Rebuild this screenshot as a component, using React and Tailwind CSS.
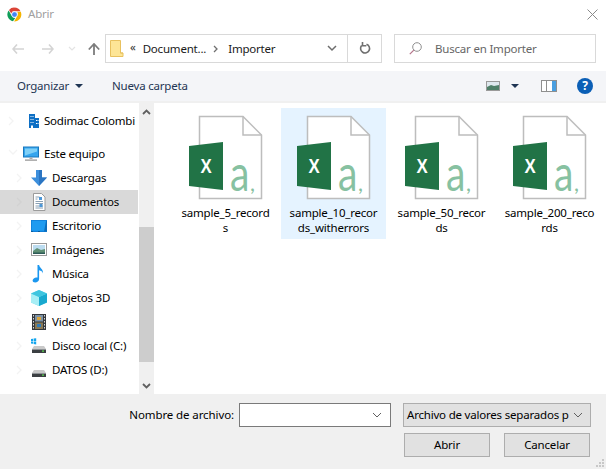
const font = { fontFamily: '"Noto Sans", sans-serif' };

function Chrome() {
  return (
    <svg width="15" height="15" viewBox="0 0 24 24" className="shrink-0">
      <path d="M12 1a11 11 0 0 1 9.600 5.600H12a5.500 5.500 0 0 0-5.200 3.600L3.200 4.600A11 11 0 0 1 12 1z" fill="#db4437" />
      <path d="M2.600 5.600l5 8.600a5.500 5.500 0 0 0 5.600 3.200L9.600 22.800A11 11 0 0 1 2.600 5.600z" fill="#0f9d58" />
      <path d="M22 7.600a11 11 0 0 1-10.600 15.400l5-8.600a5.500 5.500 0 0 0-.4-6.800z" fill="#f4b400" />
      <circle cx="12" cy="12" r="4.400" fill="#4285f4" stroke="#fff" strokeWidth="1" />
    </svg>
  );
}

function Chev({ dir = 'right', color = '#f3f3f3' }) {
  const d = dir === 'right' ? 'M1 1l4 4-4 4' : 'M1 1l4 4 4-4';
  return (
    <svg width="10" height="10" viewBox="0 0 10 10" className="shrink-0">
      <path d={d} fill="none" stroke={color} strokeWidth="1.300" />
    </svg>
  );
}

function Building() {
  return (
    <svg width="16" height="16" viewBox="0 0 16 16">
      <path d="M3 1h6v14H3zM9 5h4v10H9z" fill="#0e6fc4" />
      <path d="M4.500 3h1v1h-1zM6.500 3h1v1h-1zM4.500 6h1v1h-1zM6.500 6h1v1h-1zM4.500 9h1v1h-1zM6.500 9h1v1h-1zM10 7h1v1h-1zM11.500 7h1v1h-1zM10 10h1v1h-1zM11.500 10h1v1h-1zM5 12.500h2V15H5z" fill="#fff" />
    </svg>
  );
}
function Monitor() {
  return (
    <svg width="16" height="16" viewBox="0 0 16 16">
      <rect x="0.500" y="1" width="15" height="10" fill="#35a5ee" stroke="#1a78bd" />
      <path d="M2 2.500h12v3L2 9.500z" fill="#7fd0f7" />
      <path d="M6.500 11.500h3V13h-3z" fill="#a9a9a9" />
      <path d="M2 13.500h12v1.200H2z" fill="#8f8f8f" />
    </svg>
  );
}
function Down() {
  return (
    <svg width="16" height="16" viewBox="0 0 16 16">
      <path d="M5 0h6v7.500h5L8 16 0 7.500h5z" fill="#3d8fdc" />
      <path d="M8 0h3v7.500h5L8 16z" fill="#2b75c2" />
    </svg>
  );
}
function Doc() {
  return (
    <svg width="16" height="18" viewBox="0 0 16 18">
      <path d="M2.500 .5h8l3.500 3.500v13.500H2.500z" fill="#fff" stroke="#9b9b9b" />
      <path d="M4.500 4h4M4.500 6h2M4.500 8.500h7.500M4.500 10.500h7.500M4.500 13h7.500M4.500 15h7.500" stroke="#8aa0b4" strokeWidth="1" />
      <path d="M8 4h3v3H8zM8.500 11h3v3h-3z" fill="#4c97d8" />
    </svg>
  );
}
function Desktop() {
  return (
    <svg width="16" height="16" viewBox="0 0 16 16">
      <rect x="0" y="2" width="16" height="12" fill="#0f7fd8" />
      <rect x="0.800" y="2.800" width="14.400" height="10" fill="#1e9bf0" />
      <path d="M16 13.500h-3L15 3h1z" fill="#0c6dbb" />
      <path d="M0 14h2v-1H0zM7 14h2v-1H7z" fill="#0a5c9e" />
    </svg>
  );
}
function Pics() {
  return (
    <svg width="16" height="14" viewBox="0 0 16 14">
      <rect x="0.500" y="0.500" width="15" height="12" fill="#fff" stroke="#9a9a9a" />
      <rect x="2" y="2" width="12" height="9" fill="#bcdcf0" />
      <path d="M2 8l4-3 4 2 4-1v5H2z" fill="#5f8f74" />
      <path d="M2 9.500h12V11H2z" fill="#2d5a57" />
    </svg>
  );
}
function Music() {
  return (
    <svg width="16" height="18" viewBox="0 0 16 18">
      <path d="M6.500 0h1.600c.4 3 4.400 4 3.900 8.400C11.600 6.600 10 5.600 8.100 5.200V14c0 2-2 3.600-4 3.600-1.500 0-2.500-.8-2.500-2 0-1.800 2-3.200 3.700-3.200.5 0 .9.100 1.200.2z" fill="#1b97ef" />
    </svg>
  );
}
function Cube() {
  return (
    <svg width="16" height="16" viewBox="0 0 16 16">
      <path d="M8 0l8 3.500v9L8 16 0 12.500v-9z" fill="#6fdcec" />
      <path d="M0 3.500L8 7v9l-8-3.500z" fill="#a7eef5" />
      <path d="M8 7l8-3.500v9L8 16z" fill="#19a9cf" />
      <path d="M8 0l8 3.500L8 7 0 3.500z" fill="#3fc5df" />
    </svg>
  );
}
function Film() {
  return (
    <svg width="14" height="16" viewBox="0 0 14 16">
      <rect width="14" height="16" fill="#34383c" />
      <rect x="3" y="1" width="8" height="6.500" fill="#7d93a7" />
      <rect x="3" y="8.500" width="8" height="6.500" fill="#8a7a55" />
      <path d="M5 3h4v3H5z" fill="#d9a53b" />
      <path d="M5 10h4v3H5z" fill="#2f7dbd" />
      <path d="M1 1h1v1.500H1zM1 4h1v1.500H1zM1 7h1v1.500H1zM1 10h1v1.500H1zM1 13h1v1.500H1zM12 1h1v1.500h-1zM12 4h1v1.500h-1zM12 7h1v1.500h-1zM12 10h1v1.500h-1zM12 13h1v1.500h-1z" fill="#d8d8d8" />
    </svg>
  );
}
function Disk({ win }) {
  return (
    <svg width="16" height="16" viewBox="0 0 16 16">
      {win && <path d="M0 1l2-.3V3H0zM2.600.6L5.200.2V3H2.600zM0 3.600h2v2.200L0 5.500zM2.600 3.600h2.600v2.800l-2.600-.4z" fill="#11a5ee" />}
      <path d="M3 8h10l2 3H1z" fill="#c9c9c9" />
      <rect x="1" y="11" width="14" height="4" fill="#3b3f42" />
      <rect x="1" y="11" width="14" height="1" fill="#8d9194" />
      <rect x="11" y="12.500" width="2" height="1.200" fill="#5bdc4f" />
    </svg>
  );
}

function NavRow({ icon, label, selected }) {
  return (
    <div className={`h-[24px] flex items-center pl-[16px] ${selected ? 'bg-[#d9d9d9]' : ''}`}>
      <Chev color={selected ? '#d2d2d2' : '#f3f3f3'} />
      <div className="w-[16px] ml-[5px] mr-[5px] shrink-0 flex justify-center items-center">{icon}</div>
      <span className="whitespace-nowrap text-black">{label}</span>
    </div>
  );
}

function ExcelDoc() {
  return (
    <svg width="80" height="90" viewBox="0 0 80 90" className="block">
      <path d="M13.500 4.500H57L75.500 23v63.500h-62z" fill="#fff" stroke="#bdbdbd" strokeWidth="1.500" />
      <path d="M57 4.500V23h18.500" fill="none" stroke="#bdbdbd" strokeWidth="1.500" />
      <path d="M3 34l34-4v48l-34-4z" fill="#217346" />
      <text transform="translate(20 61) scale(0.8 1)" textAnchor="middle" fontFamily="'Liberation Sans', sans-serif" fontWeight="700" fontSize="21" fill="#fff">X</text>
      <text transform="translate(44 79) scale(0.78 1)" fontFamily="Lato, sans-serif" fontWeight="400" fontSize="50" fill="#87c1a1">a</text>
      <text x="64" y="79" fontFamily="Lato, sans-serif" fontWeight="400" fontSize="22" fill="#87c1a1">,</text>
    </svg>
  );
}

function Tile({ lines, selected }) {
  return (
    <div className={`w-[105px] h-[131px] flex flex-col items-center pt-[4px] ${selected ? 'bg-[#e5f3ff]' : ''}`}>
      <ExcelDoc />
      <div className="mt-[3px] text-center text-black leading-[15px] whitespace-nowrap">
        {lines[0]}
        <br />
        {lines[1]}
      </div>
    </div>
  );
}

export default function App() {
  return (
    <div style={font} className="w-[606px] h-[469px] bg-white flex flex-col overflow-hidden text-[11.5px] tracking-[-0.2px] relative">
      {/* Title */}
      <div className="h-[28px] flex items-center pl-[7px] pr-[8px]">
        <Chrome />
        <span className="ml-[6px] text-[#a0a0a0]">Abrir</span>
        <svg width="11" height="11" viewBox="0 0 11 11" className="ml-auto">
          <path d="M.5.5l10 10M10.500.5l-10 10" stroke="#8a8a8a" strokeWidth="1" />
        </svg>
      </div>

      {/* Nav row */}
      <div className="h-[43px] flex items-start pt-[6px]">
        <div className="w-[105px] h-[29px] flex items-center pl-[12px] shrink-0">
          <svg width="12" height="10" viewBox="0 0 12 10"><path d="M5 .5L1 5l4 4.500M1 5h11" fill="none" stroke="#d4d4d4" strokeWidth="1.600" /></svg>
          <svg width="12" height="10" viewBox="0 0 12 10" className="ml-[18px]"><path d="M7 .5L11 5 7 9.500M11 5H0" fill="none" stroke="#d4d4d4" strokeWidth="1.600" /></svg>
          <svg width="8" height="6" viewBox="0 0 8 6" className="ml-[14px]"><path d="M1 1l3 3 3-3" fill="none" stroke="#e3e3e3" strokeWidth="1.200" /></svg>
          <svg width="12" height="12" viewBox="0 0 12 12" className="ml-[12px]"><path d="M.8 6.500L6 1l5.200 5.500M6 1.500V12" fill="none" stroke="#7c7c7c" strokeWidth="1.800" /></svg>
        </div>
        <div className="w-[277px] h-[29px] border border-[#d9d9d9] flex items-center shrink-0">
          <svg width="14" height="17" viewBox="0 0 14 17" className="ml-[4px]">
            <path d="M.5.500H10.500V13H13V16.500H.5z" fill="#fde596" stroke="#e8c15f" />
            <path d="M10.500 13H13" stroke="#e8c15f" />
          </svg>
          <span className="ml-[6px] text-[#333] leading-none mb-[3px]">«</span>
          <span className="ml-[7px] text-[#1a1a1a]">Document...</span>
          <svg width="5" height="8" viewBox="0 0 5 8" className="ml-[7px]"><path d="M1 1l3 3-3 3" fill="none" stroke="#6f6f6f" strokeWidth="1.300" /></svg>
          <span className="ml-[10px] text-[#1a1a1a]">Importer</span>
          <svg width="10" height="7" viewBox="0 0 10 7" className="ml-auto mr-[10px]"><path d="M1 1l4 4 4-4" fill="none" stroke="#6d6d6d" strokeWidth="1.500" /></svg>
          <div className="w-[34px] h-full border-l border-[#d9d9d9] flex items-center justify-center">
            <svg width="12" height="13" viewBox="0 0 12 13"><path d="M7.500 2.200A4.500 4.500 0 1 1 2.600 3.600M3.500 0v3.800H7.300" fill="none" stroke="#6f6f6f" strokeWidth="1.600" /></svg>
          </div>
        </div>
        <div className="ml-[12px] w-[202px] h-[29px] border border-[#d9d9d9] flex items-center shrink-0">
          <svg width="13" height="13" viewBox="0 0 13 13" className="ml-[14px]">
            <circle cx="8" cy="5" r="4.300" fill="none" stroke="#8f8f8f" />
            <path d="M4.800 8.200L.8 12.200" stroke="#b5748a" strokeWidth="1.200" />
          </svg>
          <span className="ml-[13px] text-[#666]">Buscar en Importer</span>
        </div>
      </div>

      {/* Toolbar */}
      <div className="h-[30px] bg-[#f4f5f8] flex items-center pl-[17px] shrink-0 text-[#1f3553]">
        <span>Organizar</span>
        <svg width="8" height="4" viewBox="0 0 8 4" className="ml-[6px]"><path d="M0 0h8L4 4z" fill="#1f3553" /></svg>
        <span className="ml-[29px]">Nueva carpeta</span>
        <svg width="14" height="10" viewBox="0 0 14 10" className="ml-auto">
          <rect x=".5" y=".5" width="13" height="9" fill="#dfe8ee" stroke="#9a9a9a" />
          <path d="M1 6l4-2 3 1 5-1v5H1z" fill="#4f7f68" />
        </svg>
        <svg width="8" height="4" viewBox="0 0 8 4" className="ml-[11px]"><path d="M0 0h8L4 4z" fill="#1f3553" /></svg>
        <svg width="16" height="12" viewBox="0 0 16 12" className="ml-[22px]">
          <rect x=".5" y=".5" width="15" height="11" fill="#fff" stroke="#8f8f8f" />
          <rect x="11" y="1" width="4" height="10" fill="#4a9fe0" />
          <path d="M5.500 1v10" stroke="#8f8f8f" />
        </svg>
        <div className="ml-[20px] mr-[13px] w-[16px] h-[16px] rounded-full bg-[#0b5fb6] text-white font-bold flex items-center justify-center leading-none text-[12px]">?</div>
      </div>

      {/* Main */}
      <div className="flex-1 flex min-h-0 border-t-[2px] border-[#f0f0f0]">
        <div className="w-[139px] shrink-0 pt-[6px] pr-[1px] overflow-hidden">
          <div className="h-[24px] flex items-center pl-[8px]">
            <Chev />
            <div className="w-[16px] ml-[8px] mr-[2px] shrink-0 flex justify-center"><Building /></div>
            <span className="whitespace-nowrap text-black">Sodimac Colombi</span>
          </div>
          <div className="h-[24px] mt-[9px] flex items-center pl-[8px]">
            <Chev dir="down" />
            <div className="w-[16px] ml-[5px] mr-[5px] shrink-0 flex justify-center"><Monitor /></div>
            <span className="whitespace-nowrap text-black">Este equipo</span>
          </div>
          <NavRow icon={<Down />} label="Descargas" />
          <NavRow icon={<Doc />} label="Documentos" selected />
          <NavRow icon={<Desktop />} label="Escritorio" />
          <NavRow icon={<Pics />} label="Imágenes" />
          <NavRow icon={<Music />} label="Música" />
          <NavRow icon={<Cube />} label="Objetos 3D" />
          <NavRow icon={<Film />} label="Videos" />
          <NavRow icon={<Disk win />} label="Disco local (C:)" />
          <NavRow icon={<Disk />} label="DATOS (D:)" />
        </div>
        <div className="w-[15px] shrink-0 bg-[#f0f0f0] flex flex-col items-center">
          <div className="h-[17px] flex items-center"><svg width="9" height="6" viewBox="0 0 9 6"><path d="M1 5l3.500-3.500L8 5" fill="none" stroke="#606060" strokeWidth="1.800" /></svg></div>
          <div className="mt-[107px] w-full h-[135px] bg-[#cdcdcd]" />
          <div className="mt-auto h-[17px] flex items-center"><svg width="9" height="6" viewBox="0 0 9 6"><path d="M1 1l3.500 3.500L8 1" fill="none" stroke="#606060" strokeWidth="1.800" /></svg></div>
        </div>
        <div className="flex-1 pl-[19px] pt-[5px] flex items-start gap-[3px]">
          <Tile lines={['sample_5_record', 's']} />
          <Tile lines={['sample_10_recor', 'ds_witherrors']} selected />
          <Tile lines={['sample_50_recor', 'ds']} />
          <Tile lines={['sample_200_reco', 'rds']} />
        </div>
      </div>

      {/* Footer */}
      <div className="h-[75px] shrink-0 bg-[#f0f0f0] flex flex-col items-end pr-[15px] pt-[9px] text-black relative">
        <div className="h-[24px] flex items-center">
          <span className="mr-[5px] tracking-[-0.1px]">Nombre de archivo:</span>
          <div className="w-[152px] h-[24px] bg-white border border-[#7a7a7a] flex items-center justify-end pr-[8px]">
            <svg width="10" height="6" viewBox="0 0 10 6"><path d="M1 1l4 4 4-4" fill="none" stroke="#606060" /></svg>
          </div>
          <div className="ml-[12px] w-[188px] h-[24px] bg-[#e1e1e1] border border-[#adadad] flex items-center pl-[3px] pr-[7px]">
            <span className="whitespace-nowrap">Archivo de valores separados p</span>
            <svg width="10" height="6" viewBox="0 0 10 6" className="ml-auto"><path d="M1 1l4 4 4-4" fill="none" stroke="#606060" /></svg>
          </div>
        </div>
        <div className="mt-[6px] flex gap-[14px] pr-[1px]">
          <button className="w-[86px] h-[24px] bg-[#e1e1e1] border border-[#adadad]">Abrir</button>
          <button className="w-[86px] h-[24px] bg-[#e1e1e1] border border-[#adadad]">Cancelar</button>
        </div>
        <svg width="8" height="8" viewBox="0 0 8 8" className="absolute right-[2px] bottom-[2px]">
          <path d="M6 0h2v2H6zM3 3h2v2H3zM6 3h2v2H6zM0 6h2v2H0zM3 6h2v2H3zM6 6h2v2H6z" fill="#c8c8c8" />
        </svg>
      </div>
    </div>
  );
}
